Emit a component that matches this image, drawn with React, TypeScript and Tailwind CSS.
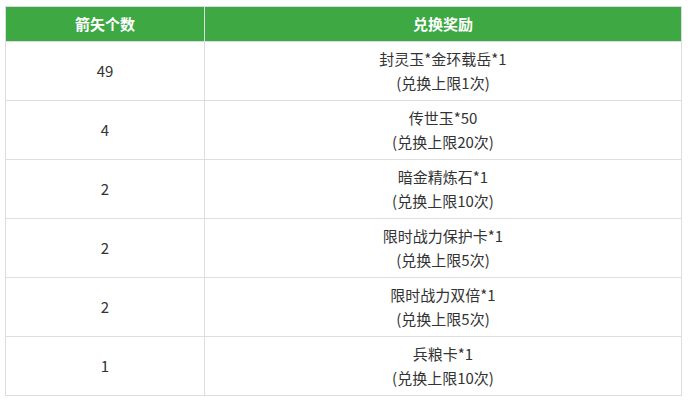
const rows = [
  { count: "49", reward: "封灵玉*金环载岳*1", limit: "(兑换上限1次)" },
  { count: "4", reward: "传世玉*50", limit: "(兑换上限20次)" },
  { count: "2", reward: "暗金精炼石*1", limit: "(兑换上限10次)" },
  { count: "2", reward: "限时战力保护卡*1", limit: "(兑换上限5次)" },
  { count: "2", reward: "限时战力双倍*1", limit: "(兑换上限5次)" },
  { count: "1", reward: "兵粮卡*1", limit: "(兑换上限10次)" },
];

const App = () => {
  return (
    <div
      className="bg-white min-h-screen pt-[6px] pl-[5px]"
      style={{ fontFamily: '"Noto Sans CJK SC", "Noto Sans", sans-serif' }}
    >
      <table className="w-[677px] border-collapse text-[15px] text-[#333]">
        <thead>
          <tr className="h-[35px] bg-[#3ea843]">
            <th className="w-[199px] border border-[#ddd] text-white font-bold text-[15px]">
              箭矢个数
            </th>
            <th className="border border-[#ddd] text-white font-bold text-[15px]">
              兑换奖励
            </th>
          </tr>
        </thead>
        <tbody>
          {rows.map((row, i) => (
            <tr key={i} className="h-[59px]">
              <td className="border border-[#ddd] text-center">{row.count}</td>
              <td className="border border-[#ddd] text-center leading-[24px] py-[5px]">
                <div>{row.reward}</div>
                <div>{row.limit}</div>
              </td>
            </tr>
          ))}
        </tbody>
      </table>
    </div>
  );
};

export default App;
